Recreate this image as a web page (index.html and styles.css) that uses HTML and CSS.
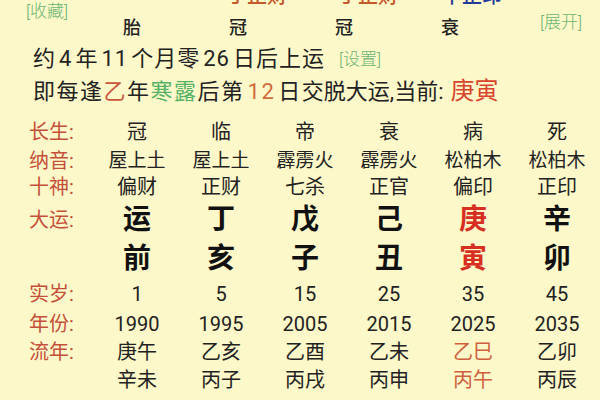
FILE: index.html
```html
<!DOCTYPE html>
<html lang="zh">
<head>
<meta charset="utf-8">
<link rel="stylesheet" href="styles.css">
</head>
<body>
<div class="page">
  <div class="header">
    <div class="link fav">[收藏]</div>
    <div class="cutrow">
      <span class="cut orange">丁正财</span>
      <span class="cut orange c2">丁正财</span>
      <span class="cut blue c3">辛正印</span>
    </div>
    <div class="stage">胎</div>
    <div class="stage">冠</div>
    <div class="stage">冠</div>
    <div class="stage">衰</div>
    <div class="link expand">[展开]</div>
  </div>

  <div class="line1">约<span class="d">4</span>年<span class="d">11</span>个月零<span class="d">26</span>日后上运<span class="link setting">[设置]</span></div>
  <div class="line2">即每逢<span class="c-yi">乙</span>年<span class="c-green">寒露</span>后第<span class="d c-num">12</span>日<span class="tight">交脱大运,当前:</span> <span class="c-cur">庚寅</span></div>

  <div class="table">
    <div class="lbl">长生:</div>
    <div class="v">冠</div><div class="v">临</div><div class="v">帝</div><div class="v">衰</div><div class="v">病</div><div class="v">死</div>

    <div class="lbl">纳音:</div>
    <div class="v sm">屋上土</div><div class="v sm">屋上土</div><div class="v sm">霹雳火</div><div class="v sm">霹雳火</div><div class="v sm">松柏木</div><div class="v sm">松柏木</div>

    <div class="lbl">十神:</div>
    <div class="v">偏财</div><div class="v">正财</div><div class="v">七杀</div><div class="v">正官</div><div class="v">偏印</div><div class="v">正印</div>

    <div class="lbl">大运:</div>
    <div class="v big">运</div><div class="v big">丁</div><div class="v big">戊</div><div class="v big">己</div><div class="v big red">庚</div><div class="v big">辛</div>

    <div class="lbl"></div>
    <div class="v big">前</div><div class="v big">亥</div><div class="v big">子</div><div class="v big">丑</div><div class="v big red">寅</div><div class="v big">卯</div>

    <div class="lbl">实岁:</div>
    <div class="v num">1</div><div class="v num">5</div><div class="v num">15</div><div class="v num">25</div><div class="v num">35</div><div class="v num">45</div>

    <div class="lbl">年份:</div>
    <div class="v num">1990</div><div class="v num">1995</div><div class="v num">2005</div><div class="v num">2015</div><div class="v num">2025</div><div class="v num">2035</div>

    <div class="lbl">流年:</div>
    <div class="v">庚午</div><div class="v">乙亥</div><div class="v">乙酉</div><div class="v">乙未</div><div class="v hl">乙巳</div><div class="v">乙卯</div>

    <div class="lbl"></div>
    <div class="v">辛未</div><div class="v">丙子</div><div class="v">丙戌</div><div class="v">丙申</div><div class="v hl">丙午</div><div class="v">丙辰</div>
  </div>
</div>
</body>
</html>
```

FILE: styles.css
```css
html, body {
  margin: 0;
  padding: 0;
  background: #fdf8c9;
}
body {
  font-family: Roboto, "Noto Sans CJK SC", sans-serif;
  color: #222;
  width: 600px;
  height: 400px;
  overflow: hidden;
}
.page {
  width: 600px;
}
.link {
  color: #6cb573;
  font-size: 17px;
  line-height: 18px;
  font-weight: 300;
  letter-spacing: 0;
}
.header {
  display: grid;
  grid-template-columns: 79px repeat(4, 106px) auto;
  grid-template-rows: 8px 40px;
}
.fav {
  grid-column: 1;
  grid-row: 1 / span 2;
  padding: 2px 0 0 26px;
  align-self: start;
}
.cutrow {
  grid-column: 2 / 6;
  grid-row: 1;
  display: flex;
  padding-left: 148px;
}
.cut {
  font-size: 20px;
  line-height: 20px;
  margin-top: -14px;
  font-weight: 500;
}
.cut.c2 { margin-left: 51px; }
.cut.c3 { margin-left: 44px; }
.orange { color: #c45a2c; }
.blue { color: #24399a; }
.stage {
  grid-row: 2;
  text-align: center;
  font-size: 18px;
  line-height: 40px;
  font-weight: 500;
}
.expand {
  grid-column: 6;
  grid-row: 1 / span 2;
  padding: 13px 0 0 37px;
  align-self: start;
}
.line1, .line2 {
  padding-left: 33px;
  font-size: 22px;
  white-space: nowrap;
}
.line1 {
  line-height: 22px;
  letter-spacing: 1px;
}
.line2 {
  line-height: 42px;
  letter-spacing: 1.5px;
}
.d {
  margin: 0 3px;
}
.tight {
  letter-spacing: 0;
}
.setting {
  margin-left: 14px;
  vertical-align: 1px;
}
.c-yi { color: #c9553a; }
.c-green { color: #55b267; }
.c-num { color: #cf6c3c; }
.c-cur { color: #d8442c; font-size: 24px; letter-spacing: 0; }
.table {
  margin-top: 5px;
  display: grid;
  grid-template-columns: 95px repeat(6, 84px);
  grid-template-rows: 28px 29px 24px 42px 36px 34px 26px 29px 28px;
  align-items: center;
}
.lbl {
  padding-left: 29px;
  color: #c4503a;
  font-size: 20px;
  line-height: 20px;
}
.v {
  text-align: center;
  font-size: 20px;
  line-height: 20px;
}
.v.sm { font-size: 19px; }
.v.big {
  font-size: 28px;
  line-height: 28px;
  font-weight: 700;
  color: #111;
}
.v.big.red { color: #d62f22; }
.v.hl { color: #d0603c; }
.v.num { font-size: 20px; }
```
